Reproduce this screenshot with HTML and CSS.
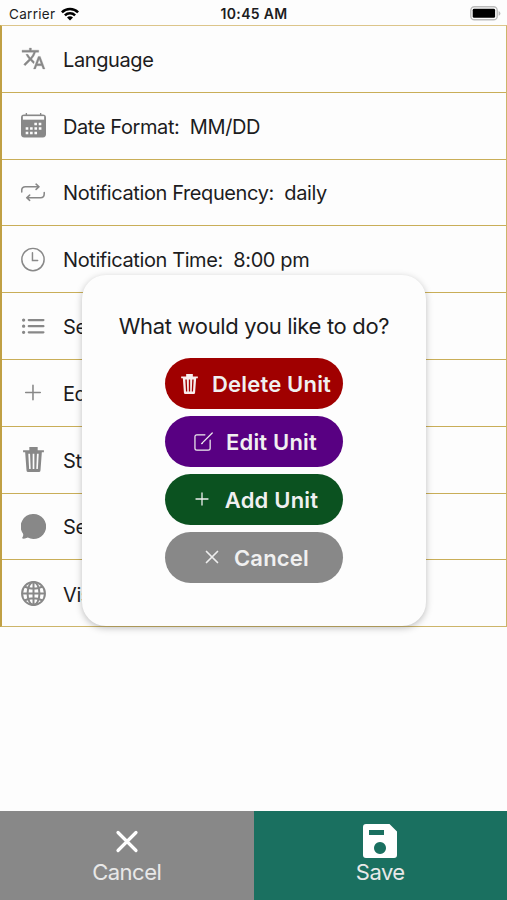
FILE: index.html
```html
<!DOCTYPE html>
<html lang="en">
<head>
<meta charset="utf-8">
<title>Settings</title>
<link rel="stylesheet" href="styles.css">
</head>
<body>
<div class="screen">
  <header class="status">
    <div class="carrier"><span>Carrier</span>
      <svg width="18" height="14" viewBox="0 0 18 14" fill="none" stroke="#000" stroke-width="2.5"><path d="M.9 5.3a11.4 11.4 0 0 1 16.2 0M3.9 8.3a7.2 7.2 0 0 1 10.2 0"/><path d="M9 13.4 6 10.4a4.2 4.2 0 0 1 6 0z" fill="#000" stroke="none"/></svg>
    </div>
    <div class="clock">10:45 AM</div>
    <svg class="battery" width="31" height="15" viewBox="0 0 31 15"><rect x=".8" y=".8" width="26.4" height="13" rx="3.6" fill="#fff" stroke="#bbb" stroke-width="1.4"/><rect x="2.7" y="2.8" width="22.4" height="9" rx="1.4"/><path d="M28.6 5v4.800q1.800-.8 1.800-2.400T28.600 5z" fill="#bbb"/></svg>
  </header>
  <main class="list">
    <div class="row"><svg class="icon" viewBox="0 0 24 24"><path fill="#888" stroke="#888" stroke-width=".3" d="M12.870 15.070l-2.540-2.510.03-.03A17.520 17.520 0 0 0 14.070 6H17V4h-7V2H8v2H1v2h11.170C11.500 7.920 10.440 9.750 9 11.350 8.070 10.320 7.300 9.190 6.690 8h-2c.73 1.630 1.730 3.170 2.980 4.560l-5.090 5.020L4 19l5-5 3.110 3.110.76-2.040zM18.500 10h-2L12 22h2l1.120-3h4.750L21 22h2l-4.500-12zm-2.620 7l1.620-4.330L19.120 17h-3.240z"/></svg><span>Language</span></div>
    <div class="row"><svg class="icon" viewBox="0 0 24 24"><path fill="#888" d="M4.500 0v1.400H3a3 3 0 0 0-3 3V6.300h24V4.400a3 3 0 0 0-3-3h-1.500V0h-1.300v1.400H5.800V0zM0 6.300V20.500a3 3 0 0 0 3 3h18a3 3 0 0 0 3-3V6.300z"/><path fill="#fdfdfd" d="M1.800 3h20.400v3.400H1.800z"/><g stroke="#fdfdfd" stroke-width="2.500" stroke-dasharray="2.500 1.700"><path d="M12.800 10.500h7M4.500 14.900h15.300M4.500 19.200h11"/></g></svg><span>Date Format:&nbsp; MM/DD</span></div>
    <div class="row"><svg class="icon" viewBox="0 0 24 24" fill="none" stroke="#888" stroke-width="1.500" stroke-linecap="round" stroke-linejoin="round"><path d="M.7 11.500V10q0-3.500 3.500-3.500H17M14.500 4 17.300 6.500l-2.800 2.500M22.300 12v1.200q0 3.800-3.500 3.800H5.800M8.300 14.500l-2.800 2.500 2.800 2.500"/></svg><span>Notification Frequency:&nbsp; daily</span></div>
    <div class="row"><svg class="icon" viewBox="0 0 24 24" fill="none" stroke="#888" stroke-width="1.400" stroke-linecap="round"><circle cx="11.500" cy="12" r="10.700"/><path d="M11 5.500V13h5"/></svg><span>Notification Time:&nbsp; 8:00 pm</span></div>
    <div class="row"><svg class="icon" viewBox="0 0 24 24" fill="none" stroke="#888" stroke-width="2.200" stroke-linecap="round"><path d="M7.500 5.800h14M7.500 11.700h14M7.500 17.600h14"/><path stroke-width="3.200" d="M2.500 5.800h.01M2.500 11.700h.01M2.500 17.600h.01"/></svg><span>Set</span></div>
    <div class="row"><svg class="icon" viewBox="0 0 24 24" fill="none" stroke="#888" stroke-width="1.500" stroke-linecap="round"><path d="M11.500 5v14M4.500 12h14"/></svg><span>Edit</span></div>
    <div class="row"><svg class="icon" viewBox="0 0 24 24"><path fill="#888" fill-rule="evenodd" d="M8 0h8v3h6v2h-2l-1.300 17.500q-.1 1.500-1.500 1.500H6.800q-1.400 0-1.500-1.500L4 5H2V3h6zM7 6.500l.8 14.500h1.500L8.700 6.500zM11.200 6.500V21h1.600V6.500zM15.300 6.500 14.700 21h1.500L17 6.500z"/></svg><span>Sta</span></div>
    <div class="row"><svg class="icon" viewBox="0 0 24 24"><path fill="#888" d="M12 0a12 12 0 1 1-5.500 22.600Q4 24 1.600 23.600q-.8-.2-.3-1Q2.500 20.800 2 19A12 12 0 0 1 12 0z"/></svg><span>Sen</span></div>
    <div class="row"><svg class="icon" viewBox="0 0 24 24" fill="none" stroke="#888" stroke-width="1.900"><circle cx="12" cy="12" r="11"/><ellipse cx="12" cy="12" rx="5.700" ry="11"/><path d="M12 1v22M1 12h22M3.800 5.500Q12 9.300 20.200 5.500M3.800 18.500q8.200-3.800 16.400 0"/></svg><span>Visi</span></div>
  </main>
  <footer class="footer">
    <button class="action discard"><svg width="30" height="34" viewBox="0 0 30 34" fill="none" stroke="#fff" stroke-width="3.200" stroke-linecap="round"><path d="m6 8.500 18 18M24 8.500l-18 18"/></svg><span>Cancel</span></button>
    <button class="action save"><svg width="34" height="34" viewBox="0 0 34 34"><path fill="#fff" fill-rule="evenodd" d="M3 0h23.500L34 7.500V31q0 3-3 3H3q-3 0-3-3V3Q0 0 3 0zM6 6v5h15V6zM17 18a6 6 0 1 0 .01 0z"/></svg><span>Save</span></button>
  </footer>
  <section class="dialog" role="dialog">
    <h1 class="question">What would you like to do?</h1>
    <button class="pill delete"><svg width="19" height="20" viewBox="1 0 22 24"><path fill="#fff" fill-opacity=".93" fill-rule="evenodd" d="M8 0h8v3h6v2h-2l-1.300 17.500q-.1 1.500-1.500 1.500H6.800q-1.400 0-1.500-1.500L4 5H2V3h6zM7 6.500l.8 14.500h1.500L8.700 6.500zM11.200 6.500V21h1.600V6.500zM15.300 6.500 14.700 21h1.500L17 6.500z"/></svg><span>Delete Unit</span></button>
    <button class="pill edit"><svg width="19" height="19" viewBox="0 0 20 20" fill="none" stroke="#eee" stroke-width="1.300" stroke-linecap="round"><path d="M11.500 3H3Q1 3 1 5v12q0 2 2 2h12q2 0 2-2V8.500M8.500 11.700 19.200 1M8 12.200l.8-.3"/></svg><span>Edit Unit</span></button>
    <button class="pill add"><svg width="19" height="19" viewBox="0 0 19 19" fill="none" stroke="#eee" stroke-width="1.300" stroke-linecap="round"><path d="M9 3v12M3 9h12"/></svg><span>Add Unit</span></button>
    <button class="pill cancel"><svg width="19" height="19" viewBox="0 0 19 19" fill="none" stroke="#eee" stroke-width="1.700" stroke-linecap="round"><path d="m4.500 3.500 11 11M15.500 3.500l-11 11"/></svg><span>Cancel</span></button>
  </section>
</div>
</body>
</html>
```
FILE: styles.css
```css
* { box-sizing: border-box; }
body { margin: 0; background: #fdfdfd; color: #1c1c1e; font-family: Inter, "Liberation Sans", sans-serif; }
button { border: 0; padding: 0; font: inherit; }
svg { display: block; flex: none; }
.screen { position: relative; display: flex; flex-direction: column; width: 507px; height: 900px; overflow: hidden; }
.status { display: grid; grid-template-columns: 1fr auto 1fr; align-items: center; height: 25px; padding: 2px 6px 0 9px; font-size: 13.5px; }
.carrier { display: flex; align-items: center; gap: 6px; letter-spacing: .3px; }
.clock { margin-left: -2px; font-size: 14px; font-weight: 600; letter-spacing: .3px; }
.battery { justify-self: end; }
.list { display: grid; grid-template-rows: repeat(9, 66.8px); height: 602px; border: 1px solid #cdb56a; border-left: 2px solid #c0a044; border-top-color: #dcc58a; }
.row { display: flex; align-items: center; gap: 17px; padding: 0 19px; border-bottom: 1px solid #c9ae58; font-size: 20px; letter-spacing: -.4px; white-space: nowrap; }
.row:last-child { border-bottom: 0; }
.icon { width: 25px; height: 25px; }
.row span { padding-top: 2px; }
.footer { display: flex; height: 89px; margin-top: auto; }
.action { display: flex; flex: 1; flex-direction: column; align-items: center; padding-top: 13px; color: #e8e8e8; font-size: 22px; line-height: 28px; letter-spacing: -.5px; }
.discard { background: #888; }
.save { background: #1a7060; }
.dialog { position: absolute; left: 82px; top: 275px; display: flex; flex-direction: column; align-items: center; gap: 7px; width: 344px; height: 351px; padding-top: 37px; border-radius: 24px; background: #fdfdfd; box-shadow: 0 2px 7px rgba(0, 0, 0, .25); }
.question { margin: 0 0 10px; font-size: 22px; line-height: 29px; font-weight: 400; letter-spacing: -.33px; white-space: nowrap; }
.pill { display: flex; align-items: center; justify-content: center; gap: 13px; width: 178px; height: 51px; padding-left: 3px; border-radius: 26px; color: #f0f0f0; font-size: 22px; font-weight: 600; letter-spacing: .2px; white-space: nowrap; }
.delete { background: #a00000; }
.edit { background: #580082; }
.add { background: #0b5220; }
.cancel { background: #888; }
```
